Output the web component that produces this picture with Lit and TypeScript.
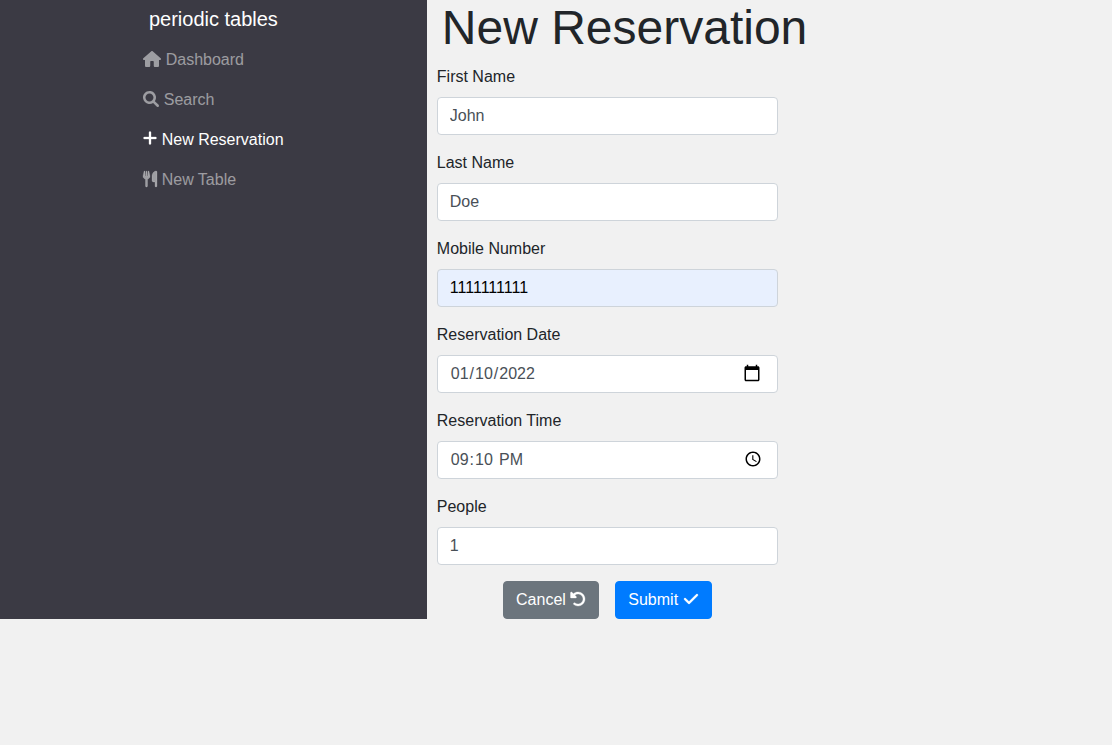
import { LitElement, html, css, svg } from "lit";
import { customElement } from "lit/decorators.js";
import { classMap } from "lit/directives/class-map.js";

type Icon = { width: number; path: string; bold?: boolean };

const icons: Record<string, Icon> = {
  home: {
    width: 576,
    path: "M575.8 255.5c0 18-15 32.1-32 32.1h-32l.7 160.2V472c0 22.1-17.9 40-40 40H384c-22.1 0-40-17.9-40-40V352c0-17.7-12-32-26-32H258c-14 0-26 14.3-26 32v120c0 22.1-17.9 40-40 40H104c-22.1 0-40-17.9-40-40V287.6H32c-18 0-32-14-32-32.1c0-9 3-17 10-24L266.4 8c7-7 15-8 22-8s15 2 21 7L564.8 231.5c8 7 12 15 11 24z",
  },
  search: {
    width: 512,
    path: "M500.3 443.7l-119.7-119.7c27.22-40.41 40.65-90.9 33.46-144.7C401.8 87.79 326.8 13.32 235.3 1.723C99.01-15.51-15.51 99.01 1.724 235.3c11.6 91.47 86.08 166.5 177.6 178.7c53.8 7.189 104.3-6.236 144.7-33.46l119.7 119.7c15.62 15.62 40.95 15.62 56.57 0C515.9 484.7 515.9 459.3 500.3 443.7zM79.1 208c0-70.58 57.42-128 128-128s128 57.42 128 128c0 70.58-57.42 128-128 128S79.1 278.6 79.1 208z",
  },
  plus: {
    width: 448,
    bold: true,
    path: "M256 48c0-17.7-14.3-32-32-32s-32 14.3-32 32V192H48c-17.7 0-32 14.3-32 32s14.3 32 32 32H192V400c0 17.7 14.3 32 32 32s32-14.3 32-32V256H400c17.7 0 32-14.3 32-32s-14.3-32-32-32H256V48z",
  },
  utensils: {
    width: 448,
    bold: true,
    path: "M416 0C400 0 288 32 288 176V304c0 26 22 48 48 48h48V480c0 17.7 14.3 32 32 32s32-14.3 32-32V352 240 32c0-17.7-14.3-32-32-32zM64 16C64 7.8 57.9 1 49.7 .1S34.2 4.6 32.4 12.5L2.1 148.8C.7 155.1 0 161.5 0 167.9c0 45.9 35.1 83.6 80 87.7V480c0 17.7 14.3 32 32 32s32-14.3 32-32V255.6c44.9-4.1 80-41.8 80-87.7c0-6.4-.7-12.8-2.1-19.1L191.6 12.5c-1.8-8-9.3-13.3-17.4-12.4S160 7.8 160 16V150.2c0 5.4-4.4 9.8-9.8 9.8c-5.1 0-9.3-3.9-9.8-9L127.9 14.6C127.2 6.3 120.3 0 112 0s-15.2 6.3-15.9 14.6L83.7 151c-.5 5.1-4.7 9-9.8 9c-5.4 0-9.8-4.4-9.8-9.8V16z",
  },
  undo: {
    width: 512,
    path: "M480 256c0 123.4-100.5 223.9-223.9 223.9c-48.84 0-95.17-15.58-134.2-44.86c-14.12-10.59-16.97-30.66-6.375-44.81c10.59-14.12 30.62-16.94 44.81-6.375c27.84 20.91 61 31.94 95.88 31.94C344.3 415.8 416 344.1 416 256s-71.69-159.8-159.8-159.8c-37.46 0-73.09 13.49-101.3 36.64l45.12 45.14c17.01 17.02 4.955 46.1-19.1 46.1H35.17C24.58 224.1 16 215.5 16 204.9V59.04c0-24.04 29.07-36.08 46.07-19.07l47.6 47.63C149.9 52.71 201.5 32.11 256.1 32.11C379.5 32.11 480 132.6 480 256z",
    bold: true,
  },
  check: {
    width: 512,
    bold: true,
    path: "M470.6 105.4c12.5 12.5 12.5 32.8 0 45.3l-256 256c-12.5 12.5-32.8 12.5-45.3 0l-128-128c-12.5-12.5-12.5-32.8 0-45.3s32.8-12.5 45.3 0L192 338.7 425.4 105.4c12.5-12.5 32.8-12.5 45.3 0z",
  },
};

const icon = (name: string) => {
  const { width, path, bold } = icons[name];
  return html`<svg class=${classMap({ icon: true, bold: !!bold })} width=${width / 32} height="16" viewBox="0 0 ${width} 512" aria-hidden="true">${svg`<path fill="currentColor" d=${path} />`}</svg>`;
};

const links = [
  { icon: "home", label: "Dashboard" },
  { icon: "search", label: "Search" },
  { icon: "plus", label: "New Reservation", active: true },
  { icon: "utensils", label: "New Table" },
];

const fields = [
  { id: "first_name", label: "First Name", type: "text", value: "John" },
  { id: "last_name", label: "Last Name", type: "text", value: "Doe" },
  { id: "mobile_number", label: "Mobile Number", type: "tel", value: "1111111111", filled: true },
  { id: "reservation_date", label: "Reservation Date", type: "date", value: "2022-01-10" },
  { id: "reservation_time", label: "Reservation Time", type: "time", value: "21:10" },
  { id: "people", label: "People", type: "number", value: "1" },
];

@customElement("app-root")
export class AppRoot extends LitElement {
  static styles = css`
    :host {
      display: block;
      min-height: 100vh;
      background: #f1f1f1;
      color: #212529;
      font: 16px/1.5 "Liberation Sans", Arial, sans-serif;
    }
    *, *::before, *::after { box-sizing: border-box; }
    .layout { display: flex; align-items: stretch; }
    .sidebar {
      width: 426.8px;
      flex: none;
      display: flex;
      flex-direction: column;
      align-items: center;
      padding-top: 4px;
      background: #3b3a44;
    }
    .brand { color: #fff; font-size: 20px; line-height: 30px; margin-bottom: 6px; text-decoration: none; }
    .nav { list-style: none; margin: 0; padding: 0; }
    .link {
      display: block;
      padding: 8px 0;
      color: rgba(255, 255, 255, 0.5);
      text-decoration: none;
      white-space: nowrap;
    }
    .link.active { color: #fff; }
    .icon { display: inline-block; vertical-align: -2px; overflow: visible; }
    .bold path { stroke: currentColor; stroke-width: 10; paint-order: stroke; }
    .main { padding-left: 10px; }
    h1 { margin: 0 0 10px; padding-left: 5px; font-size: 48px; font-weight: 500; line-height: 55px; }
    form { width: 341px; }
    .group { margin-bottom: 16px; }
    label { display: block; margin-bottom: 8px; }
    .control {
      display: block;
      width: 100%;
      height: 38px;
      padding: 6px 12px;
      font: inherit;
      color: #495057;
      background: #fff;
      border: 1px solid #ced4da;
      border-radius: 4px;
      outline: none;
    }
    .control.filled { background: #e8f0fe; color: #000; }
    .control::-webkit-datetime-edit-ampm-field { margin-left: 1px; }
    .control::-webkit-calendar-picker-indicator {
      width: 18px;
      height: 18px;
      padding: 0;
      margin: 0 3.6px 2px 0;
      opacity: 1;
      background: url("data:image/svg+xml,%3Csvg xmlns='http://www.w3.org/2000/svg' viewBox='0 0 24 24'%3E%3Cpath d='M20 3h-1V1h-2v2H7V1H5v2H4c-1.1 0-2 .9-2 2v16c0 1.1.9 2 2 2h16c1.1 0 2-.9 2-2V5c0-1.1-.9-2-2-2zm0 18H4V8h16v13z'/%3E%3C/svg%3E") center / 100% 100% no-repeat;
    }
    .control[type="time"]::-webkit-calendar-picker-indicator {
      margin: 0 2.6px 2px 0;
      background-image: url("data:image/svg+xml,%3Csvg xmlns='http://www.w3.org/2000/svg' viewBox='0 0 24 24'%3E%3Cpath d='M11.99 2C6.47 2 2 6.48 2 12s4.47 10 9.99 10C17.52 22 22 17.52 22 12S17.52 2 11.99 2zM12 20c-4.42 0-8-3.58-8-8s3.58-8 8-8 8 3.58 8 8-3.58 8-8 8zM12.5 7H11v6l5.25 3.15.75-1.23-4.5-2.67z'/%3E%3C/svg%3E");
    }
    .actions { display: flex; justify-content: center; gap: 16px; }
    .btn {
      height: 38px;
      padding: 6px 12px;
      border: 1px solid transparent;
      border-radius: 4px;
      color: #fff;
      font: inherit;
      white-space: nowrap;
    }
    .cancel { background: #6c757d; border-color: #6c757d; }
    .submit { background: #007bff; border-color: #007bff; }
  `;

  render() {
    return html`
      <div class="layout">
        <nav class="sidebar">
          <a class="brand">periodic tables</a>
          <ul class="nav">
            ${links.map(
              (l) => html`<li><a class=${classMap({ link: true, active: !!l.active })}>${icon(l.icon)} ${l.label}</a></li>`
            )}
          </ul>
        </nav>
        <main class="main">
          <h1>New Reservation</h1>
          <form>
            ${fields.map(
              (f) => html`<div class="group">
                <label for=${f.id}>${f.label}</label>
                <input id=${f.id} class=${classMap({ control: true, filled: !!f.filled })} type=${f.type} .value=${f.value} />
              </div>`
            )}
            <div class="actions">
              <button type="button" class="btn cancel">Cancel ${icon("undo")}</button>
              <button type="button" class="btn submit">Submit ${icon("check")}</button>
            </div>
          </form>
        </main>
      </div>
    `;
  }
}
